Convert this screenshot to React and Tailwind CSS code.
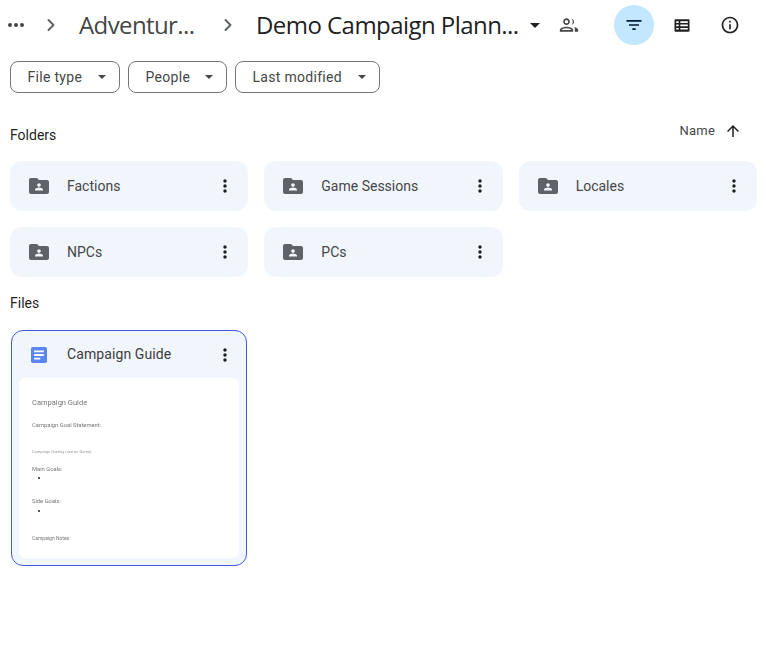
import { ChevronRight } from 'lucide-react'

const folders = ['Factions', 'Game Sessions', 'Locales', 'NPCs', 'PCs']
const chips = [
  { label: 'File type', width: 'w-[110px]' },
  { label: 'People', width: 'w-[99px]' },
  { label: 'Last modified', width: 'w-[145px]' },
]

function Caret({ className }) {
  return (
    <svg viewBox="0 0 10 5" className={className} fill="currentColor">
      <path d="M0 0l5 5 5-5z" />
    </svg>
  )
}

function Dots() {
  return (
    <svg viewBox="0 0 24 24" className="w-5 h-5 text-[#1f1f1f]" fill="currentColor">
      <path d="M12 8c1.100 0 2-.9 2-2s-.9-2-2-2-2 .9-2 2 .9 2 2 2zm0 2c-1.100 0-2 .9-2 2s.9 2 2 2 2-.9 2-2-.9-2-2-2zm0 6c-1.100 0-2 .9-2 2s.9 2 2 2 2-.9 2-2-.9-2-2-2z" />
    </svg>
  )
}

function FolderIcon() {
  return (
    <svg viewBox="0 0 24 24" className="w-6 h-6 text-[#5f6368] shrink-0" fill="currentColor">
      <path d="M20 6h-8l-2-2H4c-1.100 0-2 .9-2 2v12c0 1.100.9 2 2 2h16c1.100 0 2-.9 2-2V8c0-1.100-.9-2-2-2zm-8 3.200c1 0 1.800.8 1.800 1.800s-.8 1.800-1.800 1.800-1.800-.8-1.800-1.800.8-1.800 1.800-1.800zm4 7.300H8v-.9c0-1.300 2.700-2 4-2s4 .7 4 2v.9z" />
    </svg>
  )
}

function FolderCard({ name }) {
  return (
    <div className="h-[50px] rounded-xl bg-[#f1f5fc] flex items-center pl-[17px] pr-[13px]">
      <FolderIcon />
      <span className="ml-[16px] flex-1 text-sm text-[#444746]">{name}</span>
      <Dots />
    </div>
  )
}

export default function App() {
  return (
    <div className="w-[766px] h-[647px] bg-white overflow-hidden font-['Roboto',sans-serif]">
      <header className="h-[50px] flex items-center">
        <div className="ml-[8px] flex gap-[2px]">
          <span className="w-1 h-1 rounded-full bg-[#444746]" />
          <span className="w-1 h-1 rounded-full bg-[#444746]" />
          <span className="w-1 h-1 rounded-full bg-[#444746]" />
        </div>
        <ChevronRight className="ml-[17px] w-5 h-5 text-[#5f6368]" strokeWidth={2.4} />
        <span className="ml-[18px] w-[117px] text-2xl text-[#444746] font-['Open_Sans',sans-serif] tracking-[-0.6px]">Adventur...</span>
        <ChevronRight className="ml-[22px] w-5 h-5 text-[#5f6368]" strokeWidth={2.4} />
        <span className="ml-[18px] w-[262px] whitespace-nowrap text-2xl text-[#1f1f1f] font-['Open_Sans',sans-serif] tracking-[-0.55px]">Demo Campaign Plann...</span>
        <Caret className="ml-[12px] w-[10px] h-[5px] text-[#1f1f1f]" />
        <svg viewBox="0 0 24 24" className="ml-[19px] w-5 h-5 text-[#444746]" fill="currentColor">
          <path d="M9 12c2.200 0 4-1.800 4-4s-1.800-4-4-4-4 1.800-4 4 1.800 4 4 4zm0-6c1.100 0 2 .9 2 2s-.9 2-2 2-2-.9-2-2 .9-2 2-2zm0 8c-2.700 0-8 1.300-8 4v2h16v-2c0-2.700-5.300-4-8-4zm-6 4c.2-.7 3.300-2 6-2s5.800 1.300 6 2H3zM15 4.100c1.700.4 3 2 3 3.900s-1.300 3.500-3 3.900c.9-1 1.500-2.400 1.500-3.900S15.900 5.100 15 4.100zM18.500 14.500c1.700.6 4.500 1.700 4.500 3.500v2h-4v-2c0-1.400-.2-2.500-.5-3.500z" />
        </svg>
        <div className="ml-[35px] w-10 h-10 rounded-full bg-[#c2e7ff] flex items-center justify-center">
          <svg viewBox="0 0 24 24" className="w-5 h-5 text-[#001d35]" fill="currentColor">
            <path d="M10 18h4v-2h-4v2zM3 6v2h18V6H3zm3 7h12v-2H6v2z" />
          </svg>
        </div>
        <svg viewBox="0 0 24 24" className="ml-[18px] w-5 h-5 text-[#1f1f1f]" fill="currentColor">
          <path d="M4 5h16c.6 0 1 .4 1 1v13c0 .6-.4 1-1 1H4c-.6 0-1-.4-1-1V6c0-.6.4-1 1-1zm1 2.500V9.500h3v-2H5zm5 0v2h9v-2h-9zm-5 4v2h3v-2H5zm5 0v2h9v-2h-9zm-5 4v2h3v-2H5zm5 0v2h9v-2h-9z" />
        </svg>
        <svg viewBox="0 0 24 24" className="ml-[28px] w-5 h-5 text-[#1f1f1f]" fill="currentColor">
          <path d="M11 7h2v2h-2zm0 4h2v6h-2zm1-9C6.480 2 2 6.480 2 12s4.480 10 10 10 10-4.480 10-10S17.520 2 12 2zm0 18c-4.410 0-8-3.590-8-8s3.590-8 8-8 8 3.590 8 8-3.590 8-8 8z" />
        </svg>
      </header>

      <div className="mt-[11px] ml-[10px] flex gap-2">
        {chips.map(c => (
          <div key={c.label} className={`${c.width} h-8 rounded-lg border border-[#747775] flex items-center justify-between pl-[16.5px] pr-[8px]`}>
            <span className="text-sm text-[#444746] tracking-[0.3px]">{c.label}</span>
            <Caret className="mr-[5px] w-2 h-1 text-[#444746]" />
          </div>
        ))}
      </div>

      <div className="mt-[24px] pl-[10px] pr-[24px] h-9 flex items-start justify-between">
        <span className="mt-[8px] text-sm text-[#1f1f1f]">Folders</span>
        <div className="flex items-center gap-[9px] mt-[4px]">
          <span className="text-[13px] text-[#444746] tracking-[0.2px]">Name</span>
          <svg viewBox="0 0 24 24" className="w-[18px] h-[18px] text-[#1f1f1f]" fill="currentColor">
            <path d="M4 12l1.410 1.410L11 7.830V20h2V7.830l5.580 5.590L20 12l-8-8-8 8z" />
          </svg>
        </div>
      </div>

      <div className="mt-[8px] ml-[10px] mr-[9px] grid grid-cols-3 gap-x-[16px] gap-y-4">
        {folders.map(f => <FolderCard key={f} name={f} />)}
      </div>

      <div className="mt-[16px] ml-[10px] text-sm text-[#1f1f1f]">Files</div>

      <div className="mt-[17px] ml-[11px] w-[236px] h-[236px] rounded-xl border border-[#3f5bd9] bg-[#f1f5fc] flex flex-col">
        <div className="h-[47px] flex items-center pl-[18px] pr-[11px] shrink-0">
          <svg viewBox="0 0 18 18" className="w-4 h-4 shrink-0 ml-px">
            <rect width="18" height="18" rx="2" fill="#5b84f5" />
            <path d="M3.500 4h11v2h-11zM3.500 8h11v2h-11zM3.500 12h7v2h-7z" fill="#fff" />
          </svg>
          <span className="ml-[20px] mb-[2px] flex-1 text-sm text-[#3c3c3c] tracking-[0.1px]">Campaign Guide</span>
          <Dots />
        </div>
        <div className="ml-[7px] w-[220px] h-[180px] bg-white rounded-md pl-[13px] pt-[20px] text-[#777] flex flex-col items-start blur-[0.4px]">
          <span className="text-[7.500px] leading-[9px]">Campaign Guide</span>
          <span className="mt-[15px] text-[5.800px] leading-[7px]">Campaign Goal Statement:</span>
          <span className="mt-[20px] text-[4px] leading-[5px] text-[#999]">Campaign Overlay (use on Game)</span>
          <span className="mt-[12px] text-[5.800px] leading-[7px]">Main Goals:</span>
          <span className="mt-[4px] ml-[6px] w-[2px] h-[2px] rounded-full bg-[#222]" />
          <span className="mt-[19px] text-[5.800px] leading-[7px]">Side Goals:</span>
          <span className="mt-[5px] ml-[6px] w-[2px] h-[2px] rounded-full bg-[#222]" />
          <span className="mt-[23px] text-[5px] leading-[7px]">Campaign Notes:</span>
        </div>
      </div>
    </div>
  )
}
